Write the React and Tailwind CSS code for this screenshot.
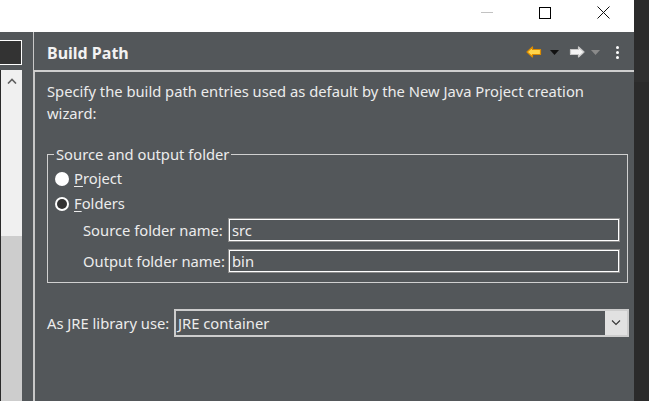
import React from "react";

const font = { fontFamily: '"Noto Sans", "Open Sans", sans-serif' };

const BackArrow = () => (
    <svg width="16" height="12" viewBox="0 0 16 12">
        <path
            d="M1 6 L6.5 1 L6.5 3.5 L14.5 3.5 L14.5 8.5 L6.5 8.5 L6.5 11 Z"
            fill="#ffd54a"
            stroke="#d98a00"
            strokeWidth="1.2"
            strokeLinejoin="round"
        />
    </svg>
);

const ForwardArrow = () => (
    <svg width="16" height="12" viewBox="0 0 16 12">
        <path
            d="M15 6 L9.5 1 L9.5 3.5 L1.5 3.5 L1.5 8.5 L9.5 8.5 L9.5 11 Z"
            fill="#f4f4f4"
            stroke="#c8c8c8"
            strokeWidth="1.2"
            strokeLinejoin="round"
        />
    </svg>
);

const Triangle = ({ color }) => (
    <svg width="9" height="5" viewBox="0 0 9 5">
        <path d="M0 0 L9 0 L4.5 5 Z" fill={color} />
    </svg>
);

const TextInput = ({ value }) => (
    <div className="flex-1 h-[24px] border border-[#8c8c8c]">
        <div className="h-full border border-white flex items-center pl-[2px] text-[#eeeeee]">
            {value}
        </div>
    </div>
);

export default function App() {
    return (
        <div className="w-[649px] h-[401px] flex overflow-hidden bg-[#2b2b2b]" style={font}>
            {/* main window */}
            <div className="w-[634px] h-full flex flex-col">
                {/* title bar */}
                <div className="h-[32px] bg-white flex items-start justify-end shrink-0 pt-[6px] pr-[2px]">
                    <div className="w-[58px] h-[13px] flex items-center justify-center">
                        <div className="w-[12px] h-px bg-[#c2c2c2]" />
                    </div>
                    <div className="w-[58px] h-[13px] flex items-center justify-center">
                        <div className="w-[12px] h-[12px] border border-black" />
                    </div>
                    <div className="w-[58px] h-[13px] flex items-center justify-center">
                        <svg width="13" height="13" viewBox="0 0 13 13">
                            <path d="M0.5 0.5 L12.5 12.5 M12.5 0.5 L0.5 12.5" stroke="#111" strokeWidth="1" />
                        </svg>
                    </div>
                </div>

                {/* body */}
                <div className="flex-1 flex bg-[#53575a]">
                    {/* left pane */}
                    <div className="w-[33px] flex flex-col pt-[8px]">
                        <div className="w-[22px] h-[25px] bg-[#333333] border border-white border-l-0" />
                        <div className="w-[22px] flex-1 mt-[5px] flex flex-col border-l border-[#2a2a2a]">
                            <div className="h-[166px] bg-[#f0f0f0] flex justify-center pt-[8px]">
                                <svg width="10" height="6" viewBox="0 0 10 6">
                                    <path d="M1 5.5 L5 1.5 L9 5.5" stroke="#606060" strokeWidth="1.6" fill="none" />
                                </svg>
                            </div>
                            <div className="flex-1 bg-[#cdcdcd]" />
                        </div>
                    </div>
                    <div className="w-px bg-[#c8c8c8]" />

                    {/* preference page */}
                    <div className="flex-1 flex flex-col">
                        <div className="h-[40px] flex items-center justify-between pl-[13px] pr-[15px] border-b-2 border-[#cfcfcf] shrink-0">
                            <span className="text-[16px] font-bold text-[#f2f2f2] pt-[4px]">Build Path</span>
                            <div className="flex items-center pt-[2px]">
                                <BackArrow />
                                <span className="ml-[8px]"><Triangle color="#111" /></span>
                                <span className="ml-[10px]"><ForwardArrow /></span>
                                <span className="ml-[6px]"><Triangle color="#8a8a8a" /></span>
                                <div className="flex flex-col gap-[2px] ml-[16px]">
                                    <div className="w-[3px] h-[3px] bg-white rounded-full" />
                                    <div className="w-[3px] h-[3px] bg-white rounded-full" />
                                    <div className="w-[3px] h-[3px] bg-white rounded-full" />
                                </div>
                            </div>
                        </div>

                        <div className="flex-1 border-l border-[#c8c8c8] pl-[12px] pr-[5px] pt-[8px] text-[14.75px] text-[#ececec]">
                            <p className="leading-[22px] pr-[20px]">
                                Specify the build path entries used as default by the New Java Project creation wizard:
                            </p>

                            {/* group */}
                            <div className="relative mt-[30px] mr-[1px] border border-[#d0d0d0] h-[129px] pt-[11px] pl-[7px] pr-[7px]">
                                <span className="absolute left-[6px] top-[-11px] px-[2px] bg-[#53575a] leading-[20px]">
                                    Source and output folder
                                </span>
                                <div className="flex items-center gap-[5px] h-[25px]">
                                    <div className="w-[14px] h-[14px] rounded-full bg-white" />
                                    <span><span className="underline underline-offset-2">P</span>roject</span>
                                </div>
                                <div className="flex items-center gap-[5px] h-[25px]">
                                    <div className="w-[14px] h-[14px] rounded-full bg-white flex items-center justify-center">
                                        <div className="w-[10px] h-[10px] rounded-full bg-[#333333]" />
                                    </div>
                                    <span><span className="underline underline-offset-2">F</span>olders</span>
                                </div>
                                <div className="flex items-center mt-[2px] pl-[28px]">
                                    <span className="w-[145px]">Source folder name:</span>
                                    <TextInput value="src" />
                                </div>
                                <div className="flex items-center mt-[7px] pl-[28px]">
                                    <span className="w-[145px]">Output folder name:</span>
                                    <TextInput value="bin" />
                                </div>
                            </div>

                            {/* JRE */}
                            <div className="flex items-center mt-[26px]">
                                <span className="w-[127px]">As JRE library use:</span>
                                <div className="flex-1 h-[28px] border-2 border-[#cdcdcd] flex">
                                    <div className="flex-1 flex items-center pl-[2px]">JRE container</div>
                                    <div className="w-[22px] bg-[#e1e1e1] flex items-center justify-center">
                                        <svg width="10" height="6" viewBox="0 0 10 6">
                                            <path d="M1 0.5 L5 4.5 L9 0.5" stroke="#333" strokeWidth="1.1" fill="none" />
                                        </svg>
                                    </div>
                                </div>
                            </div>
                        </div>
                    </div>
                </div>
            </div>

            {/* right strip */}
            <div className="flex-1 flex flex-col">
                <div className="h-[50px]" />
                <div className="h-[32px] bg-[#2f2f2f]" />
            </div>
        </div>
    );
}
